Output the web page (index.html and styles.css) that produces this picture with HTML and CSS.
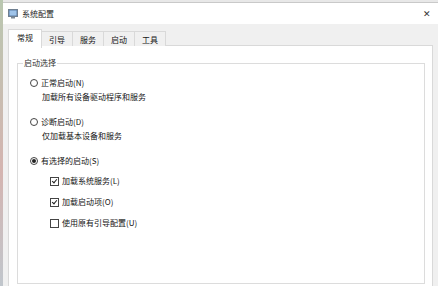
FILE: index.html
```html
<!DOCTYPE html>
<html lang="zh">
<head>
    <meta charset="UTF-8">
    <meta name="viewport" content="width=device-width, initial-scale=1.0">
    <title>系统配置</title>
    <link rel="stylesheet" href="styles.css">
</head>
<body>
    <div class="screen">
        <div class="desk"></div>
        <div class="window">
            <div class="titlebar">
                <svg class="app-icon" width="10" height="10" viewBox="0 0 10 10">
                    <rect x="0.5" y="0.5" width="9" height="7" fill="#5b7fa8" stroke="#6f7f90"/>
                    <rect x="1.5" y="1.5" width="7" height="5" fill="#9fc4ea"/>
                    <rect x="3" y="8" width="4" height="1.5" fill="#7d8a96"/>
                </svg>
                <span class="title">系统配置</span>
                <span class="close">✕</span>
            </div>
            <div class="client">
                <div class="tabs">
                    <div class="tab active">常规</div>
                    <div class="tab">引导</div>
                    <div class="tab">服务</div>
                    <div class="tab">启动</div>
                    <div class="tab">工具</div>
                </div>
                <div class="panel">
                    <fieldset class="group">
                        <legend>启动选择</legend>
                        <div class="option first">
                            <div class="row"><span class="radio"></span>正常启动(N)</div>
                            <div class="desc">加载所有设备驱动程序和服务</div>
                        </div>
                        <div class="option">
                            <div class="row"><span class="radio"></span>诊断启动(D)</div>
                            <div class="desc">仅加载基本设备和服务</div>
                        </div>
                        <div class="option">
                            <div class="row"><span class="radio checked"></span>有选择的启动(S)</div>
                            <div class="checks">
                                <div class="row"><span class="check on"></span>加载系统服务(L)</div>
                                <div class="row"><span class="check on"></span>加载启动项(O)</div>
                                <div class="row"><span class="check"></span>使用原有引导配置(U)</div>
                            </div>
                        </div>
                    </fieldset>
                </div>
            </div>
        </div>
    </div>
</body>
</html>
```

FILE: styles.css
```css
body {
    margin: 0;
    font-family: "Noto Sans CJK SC", "Liberation Sans", sans-serif;
    font-size: 8px;
    color: #141414;
    background-color: #e8e8e8;
}
.screen {
    display: flex;
    height: 286px;
    overflow: hidden;
}
.desk {
    width: 3px;
    background: linear-gradient(#b9c7b0, #d4b4b0 60%, #c0c6cc);
}
.window {
    flex: 1;
    display: flex;
    flex-direction: column;
    margin-top: 2px;
    border-top: 1px solid #c9c9c9;
    background-color: #f0f0f0;
}
.titlebar {
    flex: none;
    height: 21px;
    display: flex;
    align-items: center;
    padding-left: 5px;
    background: white;
}
.app-icon {
    margin-right: 4px;
}
.title {
    flex: 1;
    color: #222;
}
.close {
    width: 14px;
    margin-right: 1px;
    font-family: "DejaVu Sans", sans-serif;
    font-size: 9px;
    color: #333;
}
.client {
    flex: none;
    padding: 5px 5px 0 5px;
}
.tabs {
    display: flex;
    height: 17px;
    margin-bottom: -1px;
    position: relative;
}
.tab {
    width: 30px;
    margin-top: 2px;
    border: 1px solid #d9d9d9;
    border-bottom: none;
    margin-left: -1px;
    text-align: center;
    line-height: 15px;
    background: #f0f0f0;
}
.tab.active {
    width: 32px;
    margin-left: 0;
    margin-top: 0;
    height: 18px;
    background: white;
    z-index: 1;
}
.panel {
    height: 250px;
    background: white;
    border: 1px solid #d9d9d9;
    padding: 10px 7px 0 8px;
}
.group {
    margin: 0;
    height: 226px;
    padding: 0 0 0 5px;
    border: 1px solid #dcdcdc;
}
.group legend {
    padding: 0 1px;
    line-height: 14px;
    color: #333;
}
.row {
    display: flex;
    align-items: center;
    height: 14px;
    line-height: 14px;
}
.option {
    margin-top: 11px;
}
.option.first {
    margin-top: 6px;
}
.option > .row {
    padding-left: 7px;
}
.desc {
    height: 14px;
    line-height: 14px;
    padding-left: 19px;
}
.radio {
    width: 8px;
    height: 8px;
    box-sizing: border-box;
    border: 1px solid #444;
    border-radius: 50%;
    margin-right: 3px;
    display: flex;
    align-items: center;
    justify-content: center;
}
.radio.checked::after {
    content: "";
    width: 4px;
    height: 4px;
    border-radius: 50%;
    background: #222;
}
.checks {
    margin-top: 6px;
    padding-left: 27px;
    display: flex;
    flex-direction: column;
    gap: 7px;
}
.check {
    width: 9px;
    height: 9px;
    box-sizing: border-box;
    border: 1px solid #444;
    margin-right: 3px;
    position: relative;
}
.check.on::after {
    content: "";
    position: absolute;
    left: 2px;
    top: 0px;
    width: 2px;
    height: 4px;
    border: solid #222;
    border-width: 0 1px 1px 0;
    transform: rotate(40deg);
}
```
